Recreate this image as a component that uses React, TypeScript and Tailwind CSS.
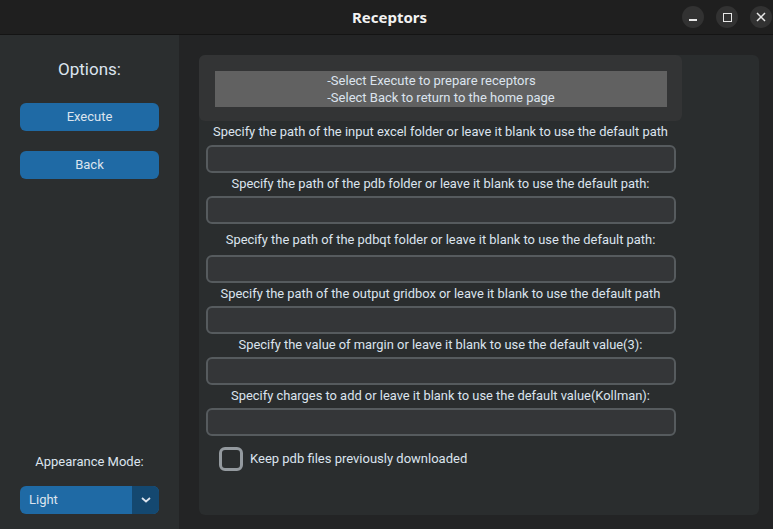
import React from "react";

const labels = [
  { text: "Specify the path of the input excel folder or leave it blank to use the default path", lm: "mt-[3px]", im: "mt-[5px]" },
  { text: "Specify the path of the pdb folder or leave it blank to use the default path:", lm: "mt-[3px]", im: "mt-[4px]" },
  { text: "Specify the path of the pdbqt folder or leave it blank to use the default path:", lm: "mt-[8px]", im: "mt-[7px]" },
  { text: "Specify the path of the output gridbox or leave it blank to use the default path", lm: "mt-[3px]", im: "mt-[4px]" },
  { text: "Specify the value of margin or leave it blank to use the default value(3):", lm: "mt-[3px]", im: "mt-[4px]" },
  { text: "Specify charges to add or leave it blank to use the default value(Kollman):", lm: "mt-[3px]", im: "mt-[4px]" },
];

export default function App() {
  return (
    <div
      className="w-[773px] h-[529px] flex flex-col overflow-hidden text-[#dce4ee]"
      style={{ fontFamily: "Roboto, 'Liberation Sans', sans-serif" }}
    >
      {/* Title bar */}
      <div className="relative h-[35px] bg-[#1f1f1f] border-b border-[#141414] flex items-center justify-center shrink-0">
        <span
          className="text-[15px] font-bold text-[#f2f2f2] pl-[6px]"
          style={{ fontFamily: "'Noto Sans', 'Open Sans', sans-serif" }}
        >
          Receptors
        </span>
        <div className="absolute right-[1px] top-[6px] flex gap-[12px]">
          <div className="w-[22px] h-[22px] rounded-full bg-[#323232] flex items-center justify-center">
            <div className="w-[8px] h-[1.5px] bg-[#e8e8e8] mt-[6px]" />
          </div>
          <div className="w-[22px] h-[22px] rounded-full bg-[#323232] flex items-center justify-center">
            <div className="w-[9px] h-[9px] border-[1.5px] border-[#e8e8e8]" />
          </div>
          <div className="w-[22px] h-[22px] rounded-full bg-[#323232] flex items-center justify-center">
            <svg width="10" height="10" viewBox="0 0 10 10">
              <path d="M1 1 L9 9 M9 1 L1 9" stroke="#e8e8e8" strokeWidth="1.5" />
            </svg>
          </div>
        </div>
      </div>

      <div className="flex flex-1 min-h-0">
        {/* Sidebar */}
        <div className="w-[179px] bg-[#2b2e2f] flex flex-col items-center shrink-0">
          <div className="mt-[22px] h-[24px] flex items-center text-[17px] leading-none">Options:</div>
          <button className="mt-[22px] w-[139px] h-[28px] rounded-[6px] bg-[#1f6aa5] text-[13px] text-[#dce4ee] flex items-center justify-center">
            Execute
          </button>
          <button className="mt-[20px] w-[139px] h-[28px] rounded-[6px] bg-[#1f6aa5] text-[13px] text-[#dce4ee] flex items-center justify-center">
            Back
          </button>
          <div className="flex-1" />
          <div className="h-[20px] flex items-center text-[13px]">Appearance Mode:</div>
          <div className="mt-[14px] mb-[15px] w-[139px] h-[28px] rounded-[6px] bg-[#1f6aa5] flex overflow-hidden">
            <div className="flex-1 flex items-center pl-[9px] text-[13px]">Light</div>
            <div className="w-[27px] bg-[#144870] flex items-center justify-center">
              <svg width="10" height="6" viewBox="0 0 10 6">
                <path d="M1 1 L5 4.5 L9 1" stroke="#dce4ee" strokeWidth="1.8" fill="none" />
              </svg>
            </div>
          </div>
        </div>

        {/* Main */}
        <div className="flex-1 bg-[#232425] pl-[20px] pt-[20px] pr-[14px] pb-[14px]">
          <div className="w-full h-full rounded-[6px] bg-[#2a2d2e] flex flex-col">
            <div className="w-[483px] flex flex-col">
              <div className="h-[66px] rounded-[6px] bg-[#333435] pt-[16px] pl-[16px]">
                <div className="w-[452px] h-[36px] bg-[#616161] flex items-center justify-center text-[13px] leading-[17px]">
                  <div className="text-left">
                    <div>-Select Execute to prepare receptors</div>
                    <div>-Select Back to return to the home page</div>
                  </div>
                </div>
              </div>
              {labels.map((l, i) => (
                <React.Fragment key={i}>
                  <div className={`${l.lm} h-[16px] text-[12.9px] leading-[16px] text-center whitespace-nowrap`}>{l.text}</div>
                  <div className={`${l.im} ml-[7px] mr-[6px] h-[28px] rounded-[6px] border-2 border-[#565b5e] bg-[#343638]`} />
                </React.Fragment>
              ))}
              <div className="mt-[11px] ml-[20px] flex items-center">
                <div className="w-[24px] h-[24px] rounded-[6px] border-[3px] border-[#949a9f]" />
                <span className="ml-[7px] text-[13px]">Keep pdb files previously downloaded</span>
              </div>
            </div>
          </div>
        </div>
      </div>
    </div>
  );
}
